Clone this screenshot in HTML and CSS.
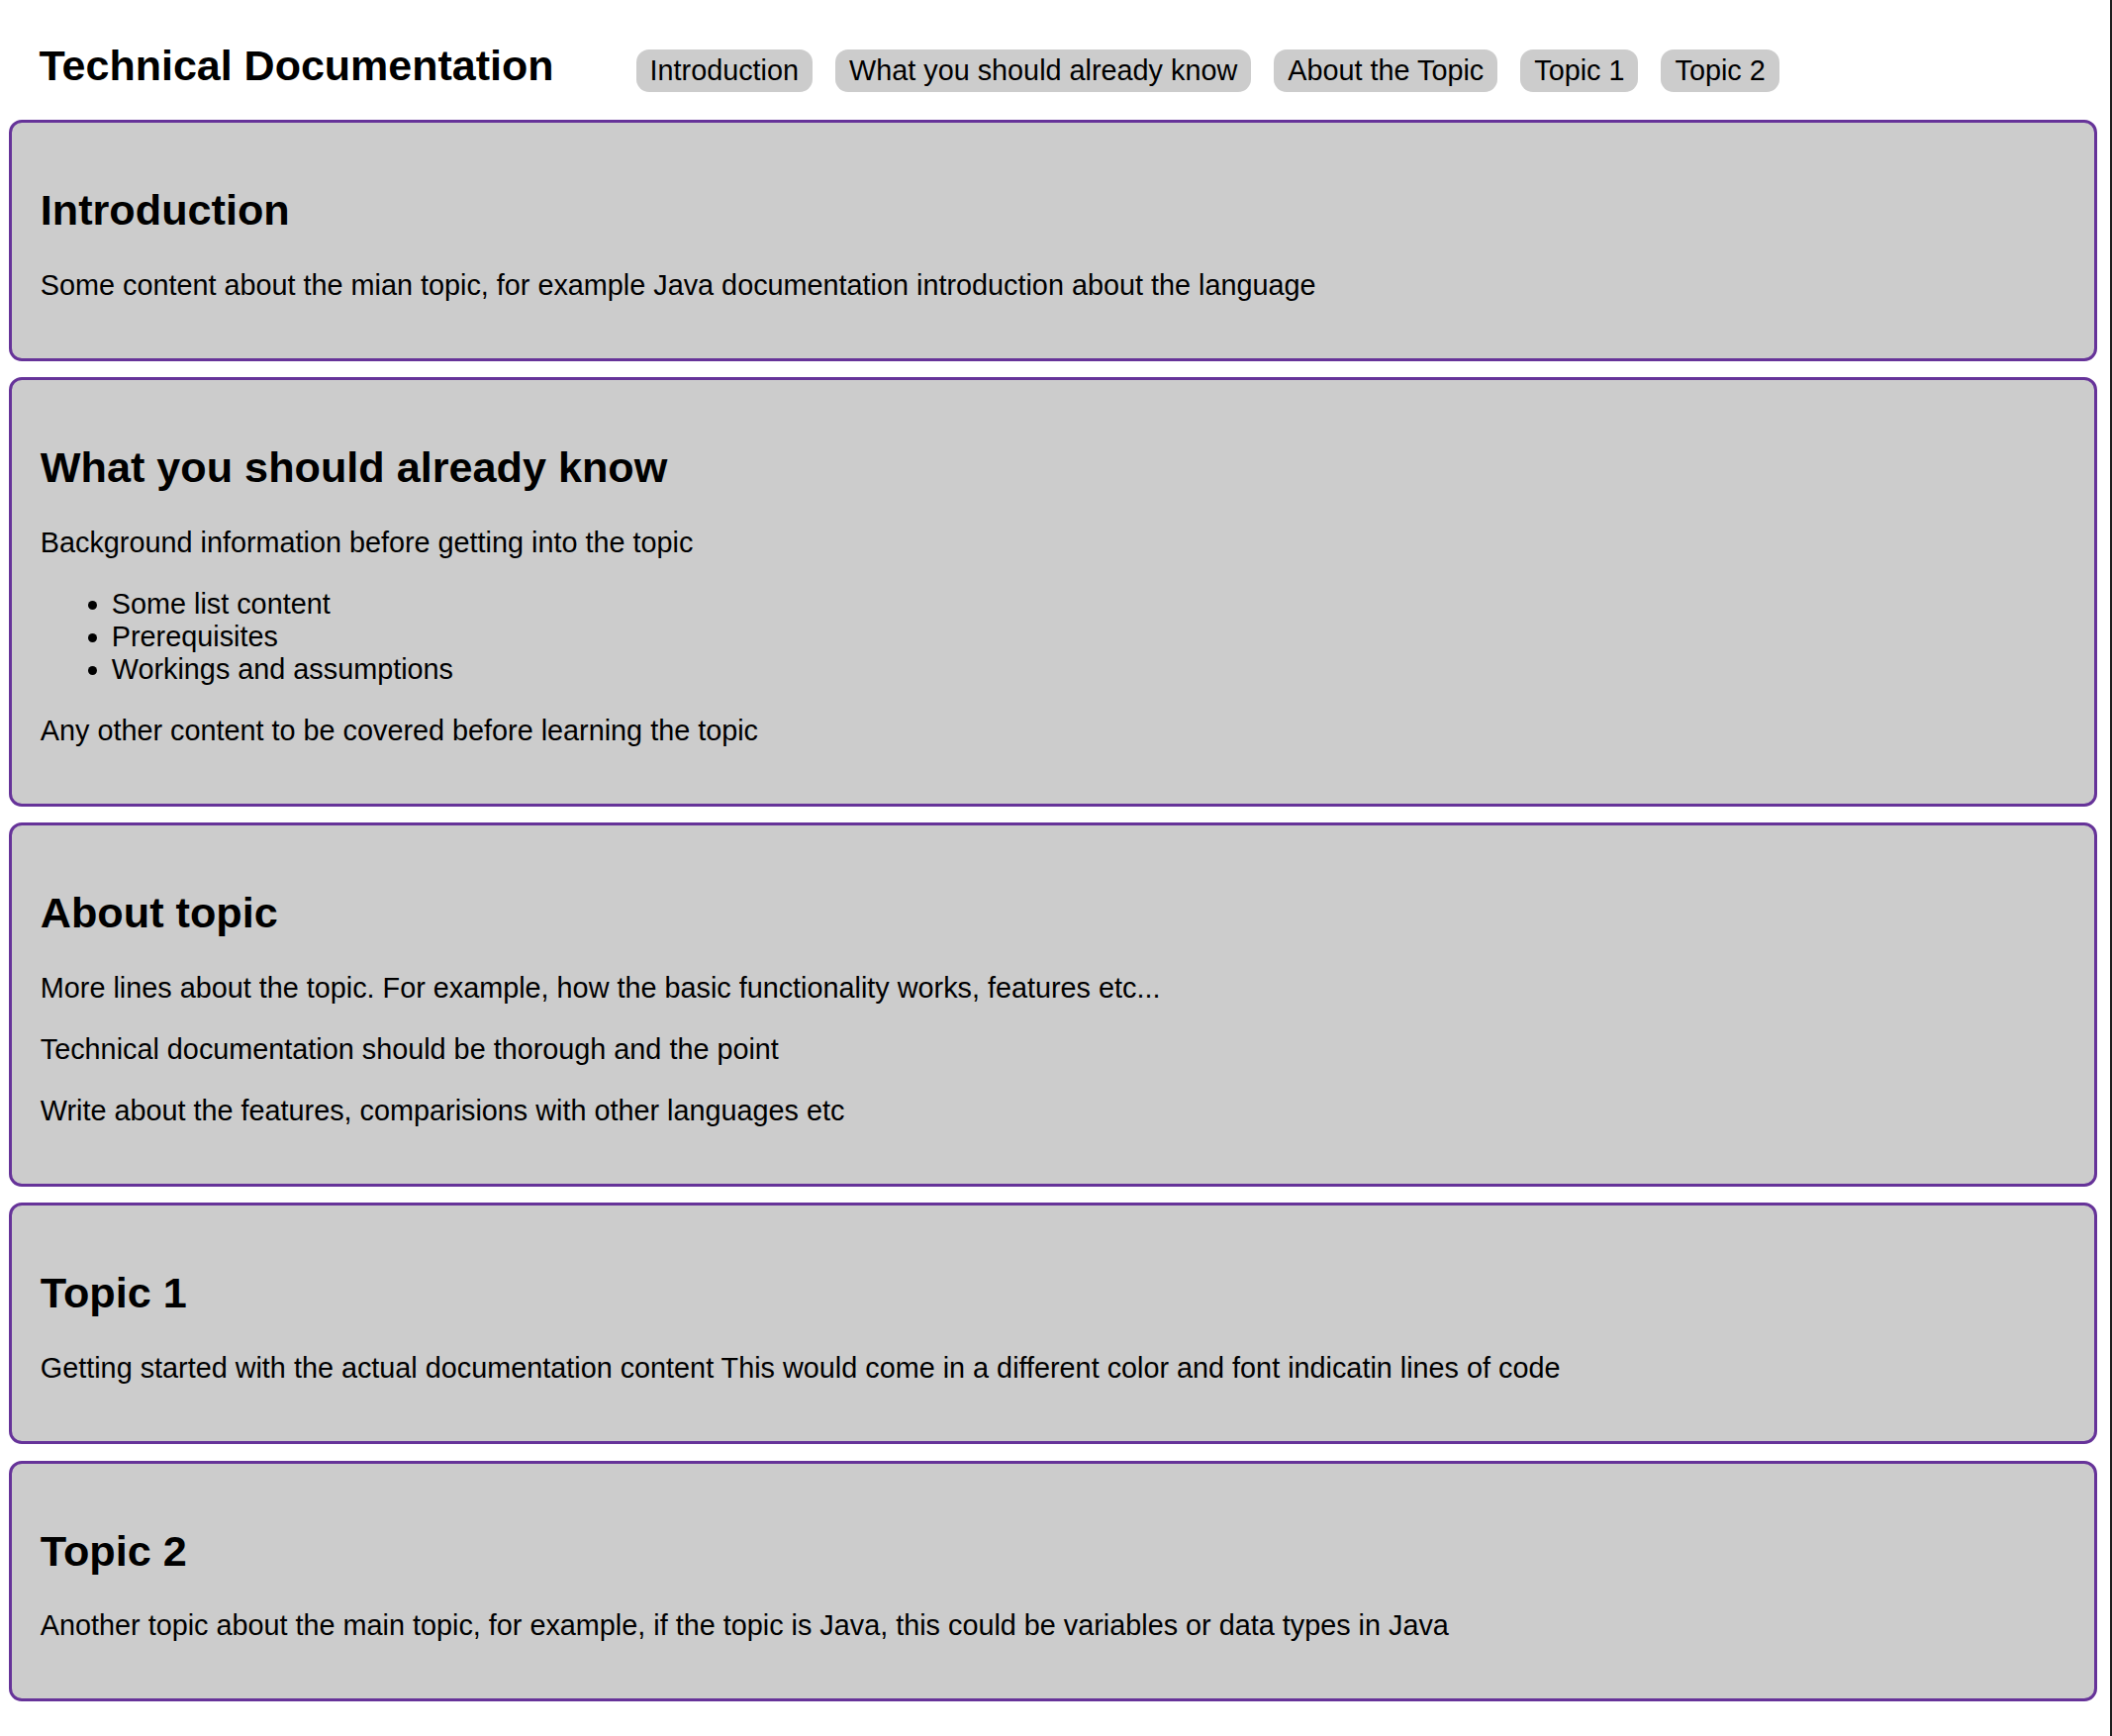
FILE: index.html
```html
<!DOCTYPE html>
<html lang="en">
<head>
<meta charset="utf-8">
<title>Technical Documentation</title>
<link rel="stylesheet" href="styles.css">
</head>
<body>
<header class="top">
  <h1 class="title">Technical Documentation</h1>
  <nav class="nav">
    <a class="pill" href="#introduction">Introduction</a>
    <a class="pill" href="#know">What you should already know</a>
    <a class="pill" href="#about">About the Topic</a>
    <a class="pill" href="#topic1">Topic 1</a>
    <a class="pill" href="#topic2">Topic 2</a>
  </nav>
</header>
<main class="main">
  <section class="card" id="introduction">
    <h2 class="card-title">Introduction</h2>
    <p class="text">Some content about the mian topic, for example Java documentation introduction about the language</p>
  </section>
  <section class="card" id="know">
    <h2 class="card-title">What you should already know</h2>
    <p class="text">Background information before getting into the topic</p>
    <ul class="list">
      <li>Some list content</li>
      <li>Prerequisites</li>
      <li>Workings and assumptions</li>
    </ul>
    <p class="text">Any other content to be covered before learning the topic</p>
  </section>
  <section class="card" id="about">
    <h2 class="card-title">About topic</h2>
    <p class="text">More lines about the topic. For example, how the basic functionality works, features etc...</p>
    <p class="text">Technical documentation should be thorough and the point</p>
    <p class="text">Write about the features, comparisions with other languages etc</p>
  </section>
  <section class="card" id="topic1">
    <h2 class="card-title">Topic 1</h2>
    <p class="text">Getting started with the actual documentation content This would come in a different color and font indicatin lines of code</p>
  </section>
  <section class="card" id="topic2">
    <h2 class="card-title">Topic 2</h2>
    <p class="text">Another topic about the main topic, for example, if the topic is Java, this could be variables or data types in Java</p>
  </section>
</main>
</body>
</html>
```

FILE: styles.css
```css
html {
  min-height: 100%;
  border-right: 2px solid #1e1e1e;
  background: #ffffff;
}

body {
  margin: 0 13px 0 9px;
  font-family: "Liberation Sans", Arial, sans-serif;
  font-size: 28.8px;
  line-height: 1.149;
  color: #000000;
}

.top {
  display: flex;
  align-items: baseline;
  padding: 42px 0 0 30.5px;
}

.title {
  margin: 0 83px 0 0;
  font-size: 43px;
  line-height: 1.149;
  font-weight: bold;
}

.nav {
  display: flex;
  align-items: baseline;
  gap: 23px;
}

.pill {
  display: block;
  padding: 5px 14px;
  background: #cccccc;
  border-radius: 13px;
  color: #000000;
  text-decoration: none;
  font-size: 28.8px;
}

.main {
  display: flex;
  flex-direction: column;
  gap: 16.5px;
  margin-top: 28px;
  padding-bottom: 30px;
}

.card {
  background: #cccccc;
  border: 3px solid #663399;
  border-radius: 13px;
  padding: 0 28.8px;
}

.card-title {
  font-size: 43.2px;
  line-height: 1.149;
  font-weight: bold;
  margin: 64px 0 34px;
}

.text {
  margin: 0 0 28.8px;
}

.card > .text:last-child,
.card > .list:last-child {
  margin-bottom: 57px;
}

.list {
  margin: 0 0 28.8px;
  padding-left: 72px;
}
```
